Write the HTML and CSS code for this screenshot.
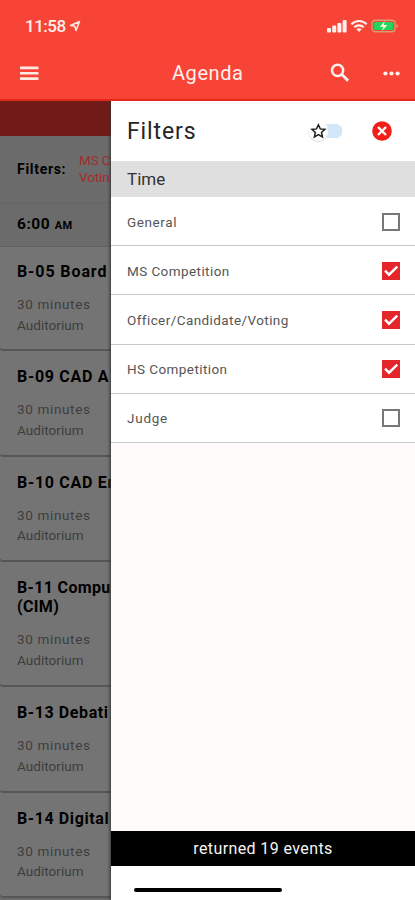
FILE: index.html
```
<!DOCTYPE html>
<html lang="en">
<head>
<meta charset="utf-8">
<title>Agenda</title>
<link rel="stylesheet" href="styles.css">
</head>
<body>
<div class="app">
  <header class="top">
    <div class="status">
      <span class="clock">11:58</span>
      <svg class="location" width="12" height="12" viewBox="0 0 12 12"><path d="M1.500 5.500 10.500 1.500 7 10.500 5.800 6.200Z" fill="none" stroke="#ffe5e0" stroke-width="1.600" stroke-linejoin="round"/></svg>
      <div class="signals">
        <svg width="20" height="14" viewBox="0 0 20 14" fill="#fff0ed"><rect x="0" y="9" width="4" height="4.500" rx="1"/><rect x="5.200" y="6.500" width="4" height="7" rx="1"/><rect x="10.400" y="4" width="4" height="9.500" rx="1"/><rect x="15.600" y="1" width="4" height="12.500" rx="1"/></svg>
        <svg width="18" height="14" viewBox="0 0 18 14" fill="none" stroke="#fff0ed" stroke-width="2.200"><path d="M1.400 5.300C5.600.900 12.400.900 16.600 5.300M4.300 8.300C7 5.600 11 5.600 13.700 8.300"/><path d="M6.400 10.200Q9 8.200 11.600 10.200L9 13Z" fill="#fff0ed" stroke="none"/></svg>
        <svg width="28" height="14" viewBox="0 0 28 14"><rect x="1" y="1.200" width="23" height="11.600" rx="3.200" fill="none" stroke="#dc9a72" stroke-width="1.400"/><rect x="3" y="3" width="19" height="8" rx="1.200" fill="#20d75b"/><path d="M13.800 2 8.800 7.700h3.400L11 12l5.300-5.900h-3.500z" fill="#fff4df"/><path d="M25.500 5v4q1.600-.600 1.600-2t-1.600-2" fill="#dc9a72"/></svg>
      </div>
    </div>
    <nav class="nav">
      <svg class="menu" width="19" height="15" viewBox="0 0 19 15" fill="#ffe9e5"><path d="M0 .5h18.500v2.700H0zM0 5.900h18.500v2.700H0zM0 11.200h18.500v2.700H0z"/></svg>
      <h1>Agenda</h1>
      <svg class="search" width="20" height="20" viewBox="0 0 20 20" fill="none" stroke="#fff0ed"><circle cx="7.600" cy="7.300" r="5.600" stroke-width="2.500"/><path d="m11.800 11.500 6.300 6.300" stroke-width="3"/></svg>
      <svg class="more" width="17" height="5" viewBox="0 0 17 5" fill="#fff0ed"><circle cx="2.400" cy="2.500" r="2.100"/><circle cx="8.500" cy="2.500" r="2.100"/><circle cx="14.600" cy="2.500" r="2.100"/></svg>
    </nav>
  </header>
  <div class="content">
    <main class="agenda">
      <div class="band"></div>
      <div class="active"><b>Filters:</b><span>MS C<br>Votin</span></div>
      <h2 class="hour">6:00 <small>AM</small></h2>
      <article class="event first"><h3>B-05 Board</h3><p>30 minutes</p><p class="place">Auditorium</p></article>
      <article class="event"><h3>B-09 CAD A</h3><p>30 minutes</p><p class="place">Auditorium</p></article>
      <article class="event"><h3>B-10 CAD Er</h3><p>30 minutes</p><p class="place">Auditorium</p></article>
      <article class="event tall"><h3>B-11 Compu<br>(CIM)</h3><p>30 minutes</p><p class="place">Auditorium</p></article>
      <article class="event"><h3 class="wide">B-13 Debati</h3><p>30 minutes</p><p class="place">Auditorium</p></article>
      <article class="event"><h3 class="wide">B-14 Digital</h3><p>30 minutes</p><p class="place">Auditorium</p></article>
    </main>
    <aside class="drawer">
      <div class="drawer-head">
        <h2>Filters</h2>
        <svg class="favorite" width="38" height="24" viewBox="0 0 38 24"><path d="M10 5h20l4 3.500v7L30 19H10z" fill="#d2e7f9"/><circle cx="10.400" cy="12.900" r="10.200" fill="#dedede"/><circle cx="10.400" cy="12" r="10" fill="#fff"/><path d="m10.400 5.700 1.900 4.200 4.600.500-3.400 3.100.950 4.500-4.050-2.300-4.050 2.300.950-4.500-3.400-3.100 4.600-.500z" fill="none" stroke="#222" stroke-width="1.500"/></svg>
        <svg class="close" width="20" height="20" viewBox="0 0 20 20"><circle cx="10" cy="10" r="9.800" fill="#f01f19"/><path d="m6 6 8 8m0-8-8 8" stroke="#fff" stroke-width="2.400"/></svg>
      </div>
      <h3 class="section">Time</h3>
      <div class="option"><span class="general">General</span><i class="box"></i></div>
      <div class="option"><span>MS Competition</span><i class="box on"><svg width="18" height="18" viewBox="0 0 18 18"><path d="m3 8.700 4 4 8.300-8" fill="none" stroke="#fff" stroke-width="2.400"/></svg></i></div>
      <div class="option"><span>Officer/Candidate/Voting</span><i class="box on"><svg width="18" height="18" viewBox="0 0 18 18"><path d="m3 8.700 4 4 8.300-8" fill="none" stroke="#fff" stroke-width="2.400"/></svg></i></div>
      <div class="option"><span>HS Competition</span><i class="box on"><svg width="18" height="18" viewBox="0 0 18 18"><path d="m3 8.700 4 4 8.300-8" fill="none" stroke="#fff" stroke-width="2.400"/></svg></i></div>
      <div class="option"><span class="judge">Judge</span><i class="box"></i></div>
      <div class="space"></div>
      <div class="result">returned 19 events</div>
      <div class="home"><i></i></div>
    </aside>
  </div>
</div>
</body>
</html>
```
FILE: styles.css
```
* { box-sizing: border-box; }
body { margin: 0; font-family: Roboto, "Liberation Sans", sans-serif; }
h1, h2, h3, p { margin: 0; font-weight: 400; }
svg { display: block; flex: none; }
.app { width: 415px; height: 900px; overflow: hidden; display: flex; flex-direction: column; }
.top { height: 101px; flex: none; background: #f84437; border-bottom: 2px solid #e3271b; color: #fff0ed; }
.status { height: 50px; display: flex; align-items: center; padding: 2px 16px 0 25px; }
.clock { font-size: 17px; font-weight: 500; letter-spacing: -.5px; width: 43px; white-space: nowrap; }
.location { margin-left: 1px; }
.signals { display: flex; gap: 3px; margin-left: auto; align-items: center; }
.nav { height: 46px; display: grid; grid-template-columns: 152px 1fr 53px 17px; align-items: center; padding: 0 15px 0 20px; }
.nav h1 { font-size: 20px; letter-spacing: .55px; }
.content { flex: 1; min-height: 0; position: relative; overflow: hidden; }
.agenda { background: #6b6b6b; height: 799px; overflow: hidden; width: 111px; white-space: nowrap; color: #000; }
.band { height: 35px; background: #721c17; }
.active { height: 67px; display: flex; align-items: center; padding-left: 17px; border-bottom: 1px solid #656565; background: #6c6c6c; font-size: 14px; }
.active b { width: 62px; flex: none; letter-spacing: .7px; font-weight: 700; }
.active span { flex: none; color: #a52b2b; line-height: 17px; font-size: 13.500px; letter-spacing: -.1px; }
.hour { height: 43px; line-height: 43px; padding-left: 17px; font-size: 15.500px; font-weight: 700; letter-spacing: .55px; }
.hour small { font-size: 11px; font-weight: 700; }
.event { height: 105.400px; padding: 16px 0 0 17px; background: #747474; border-bottom: 2px solid #565656; border-radius: 0 0 0 4px; }
.event.first { border-top: 1px solid #606060; padding-top: 15px; }
.event.tall { height: 125px; }
.event h3 { font-size: 16px; line-height: 19px; font-weight: 700; letter-spacing: .7px; margin-bottom: 13px; }
.event.first h3 { letter-spacing: .9px; }
.event.tall h3 { letter-spacing: .35px; }
.event h3.wide { letter-spacing: .6px; }
.event p { color: #3d3d3d; font-size: 13.500px; line-height: 20.500px; letter-spacing: .65px; }
.event .place { letter-spacing: .05px; }
.drawer { position: absolute; left: 111px; right: 0; top: 0; bottom: 0; display: flex; flex-direction: column; background: #fffbfa; box-shadow: -1px 0 3px #333; }
.drawer-head { height: 60px; flex: none; display: flex; align-items: center; background: #fff; padding-left: 16px; }
.drawer-head h2 { width: 181px; font-size: 23px; letter-spacing: .9px; color: #252525; }
.close { margin-left: 26px; }
.section { height: 36px; flex: none; background: #dfdfdf; padding-left: 16px; line-height: 37px; font-size: 17px; letter-spacing: 0; color: #333; }
.option { height: 49.200px; flex: none; background: #fff; display: flex; align-items: center; justify-content: space-between; padding: 1px 15px 0 16px; border-bottom: 1px solid #c8c8c8; color: #555; font-size: 13.500px; letter-spacing: .42px; }
.option .general { letter-spacing: .6px; }
.option .judge { letter-spacing: .75px; }
.box { width: 18px; height: 18px; border: 2px solid #777; flex: none; }
.box.on { background: #e4252a; border: 0; }
.space { flex: 1; }
.result { height: 35px; flex: none; background: #000; color: #f5f5f5; text-align: center; line-height: 36px; font-size: 16px; letter-spacing: .4px; }
.home { height: 34px; flex: none; background: #fff; padding: 22px 0 0 23px; }
.home i { display: block; width: 148px; height: 4px; border-radius: 2px; background: #000; }
```
